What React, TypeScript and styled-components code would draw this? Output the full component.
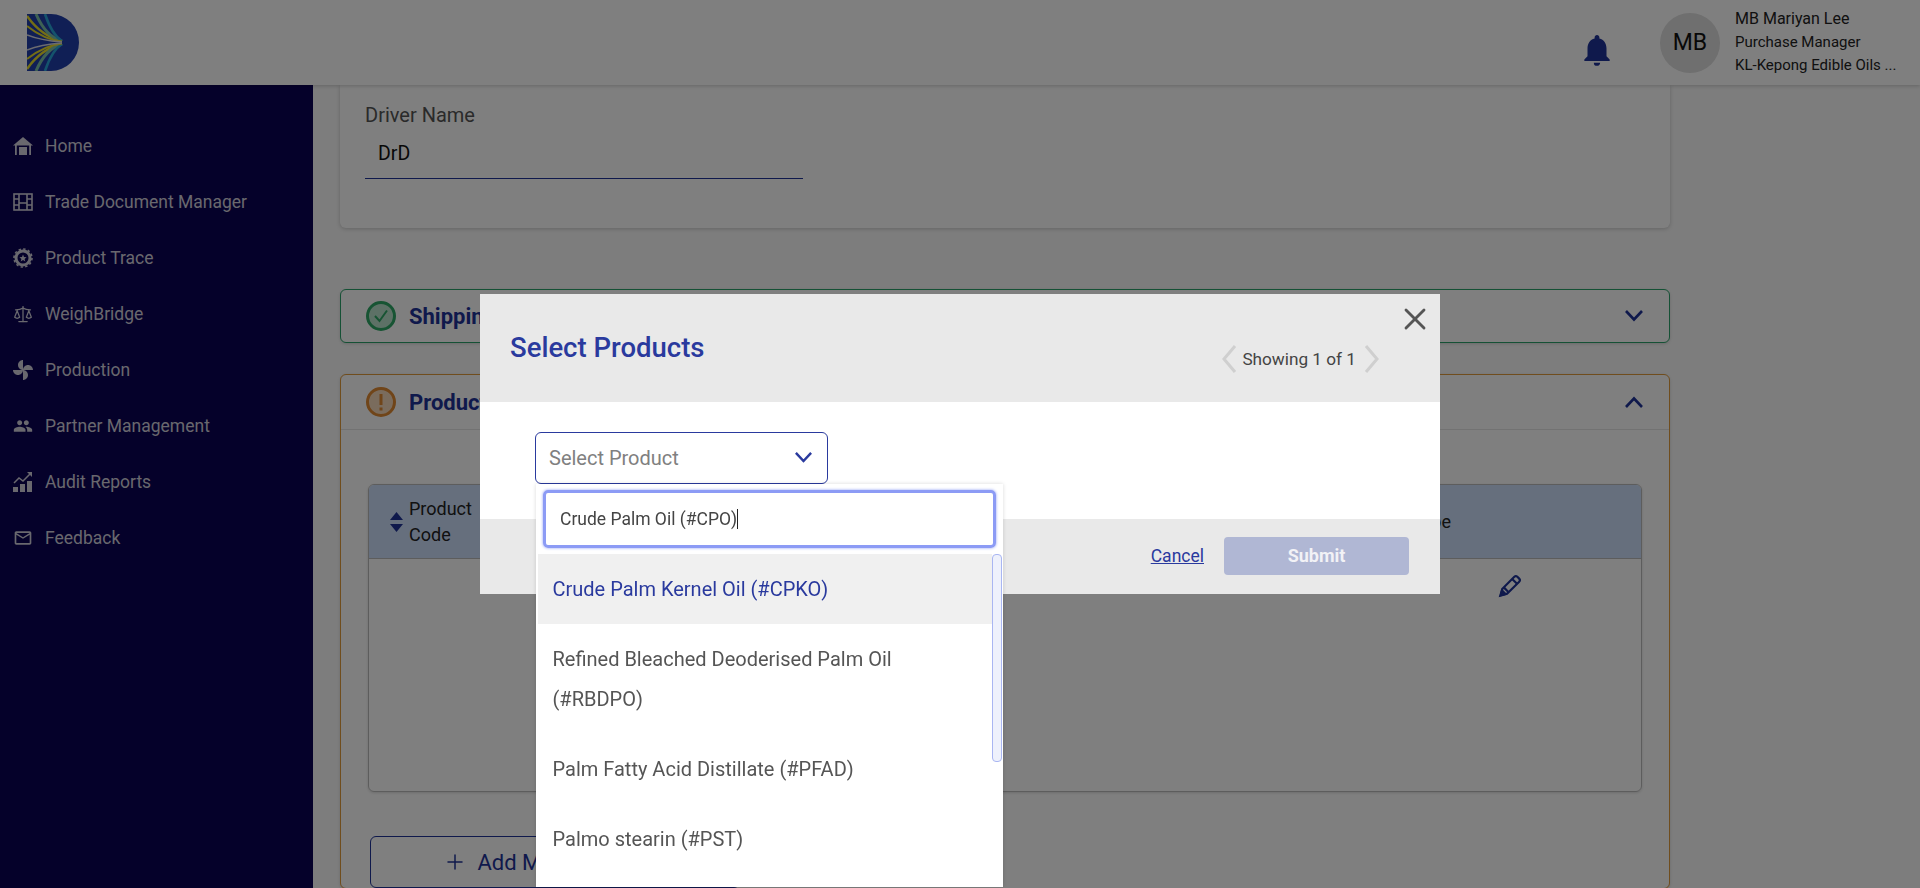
import { Plus, Scale, X } from "lucide-react";
import { MdMailOutline, MdNotifications, MdPeople } from "react-icons/md";
import styled, { createGlobalStyle } from "styled-components";

const navy = "#1f3398";
const indigo = "#2a3a9e";

const GlobalStyle = createGlobalStyle`
  * {
    box-sizing: border-box;
  }
  html, body {
    margin: 0;
    height: 100%;
    overflow: hidden;
    font-family: Roboto, "Liberation Sans", sans-serif;
  }
`;

const Page = styled.div`
  height: 100vh;
  display: flex;
  flex-direction: column;
  overflow: hidden;
  background: #fafafa;
`;

const Topbar = styled.header`
  height: 85px;
  flex: none;
  display: flex;
  align-items: center;
  padding: 0 10px 0 27px;
  background: #fff;
  box-shadow: 0 1px 4px rgba(0, 0, 0, 0.2);
  z-index: 1;
`;

const BellWrap = styled.div`
  margin-left: auto;
  display: flex;
  margin-top: 15px;
  color: ${navy};
`;

const Avatar = styled.div`
  width: 60px;
  height: 60px;
  margin: 0 15px 0 44px;
  border-radius: 50%;
  background: #dedede;
  color: #111;
  font-size: 23px;
  display: flex;
  align-items: center;
  justify-content: center;
`;

const UserBox = styled.div`
  width: 175px;
  margin-top: -2px;
  display: flex;
  flex-direction: column;
  color: #222;
`;

const UserName = styled.div`
  font-size: 16px;
  line-height: 24px;
`;

const UserLine = styled.div`
  font-size: 15px;
  line-height: 23px;
  white-space: nowrap;
`;

const Body = styled.div`
  flex: 1;
  display: flex;
  min-height: 0;
`;

const Sidebar = styled.nav`
  width: 313px;
  flex: none;
  padding-top: 33px;
  background: #0a0254;
`;

const NavItem = styled.div`
  height: 56px;
  display: flex;
  align-items: center;
  gap: 12px;
  padding-left: 13px;
  color: #d2d0dc;
  font-size: 17.5px;
`;

const Main = styled.main`
  flex: 1;
  padding: 0 250px 0 27px;
  overflow: hidden;
`;

const DriverCard = styled.section`
  height: 143px;
  padding: 18px 25px 0;
  background: #fff;
  border-radius: 0 0 6px 6px;
  box-shadow: 0 1px 4px rgba(0, 0, 0, 0.2);
`;

const FieldLabel = styled.div`
  font-size: 20px;
  line-height: 25px;
  color: #555;
`;

const FieldValue = styled.div`
  width: 438px;
  height: 51px;
  padding-left: 13px;
  display: flex;
  align-items: center;
  font-size: 19.5px;
  color: #111;
  border-bottom: 1px solid ${navy};
`;

const Accordion = styled.section<{ $tone: string; $gap: number }>`
  margin-top: ${({ $gap }) => $gap}px;
  border: 1px solid ${({ $tone }) => $tone};
  border-radius: 6px;
  background: #fff;
  box-shadow: 0 1px 3px rgba(0, 0, 0, 0.15);
`;

const AccordionHead = styled.div<{ $divided?: boolean }>`
  height: ${({ $divided }) => ($divided ? 55 : 52)}px;
  display: flex;
  align-items: center;
  gap: 13px;
  padding: 0 25px 0 25px;
  color: ${navy};
  border-bottom: ${({ $divided }) => ($divided ? "1px solid #e4e4e4" : "none")};
`;

const AccordionTitle = styled.div`
  flex: 1;
  font-size: 22px;
  font-weight: 700;
`;

const AccordionPanel = styled.div`
  padding: 54px 27px 0;
`;

const ProductTable = styled.div`
  width: 1274px;
  height: 308px;
  border: 1px solid #bbb;
  border-radius: 6px;
  overflow: hidden;
  box-shadow: 0 1px 3px rgba(0, 0, 0, 0.15);
`;

const TableRow = styled.div<{ $head?: boolean }>`
  display: grid;
  grid-template-columns: 140px 1fr 1fr 1fr 150px 190px;
  height: ${({ $head }) => ($head ? "74px" : "auto")};
  align-items: center;
  background: ${({ $head }) => ($head ? "#cddffa" : "transparent")};
  border-bottom: ${({ $head }) => ($head ? "1px solid #bbb" : "none")};
`;

const HeadCell = styled.div<{ $right?: boolean }>`
  display: flex;
  align-items: center;
  justify-content: ${({ $right }) => ($right ? "flex-end" : "flex-start")};
  gap: 6px;
  padding-left: 21px;
  font-size: 18px;
  line-height: 26px;
  color: #222;
`;

const EditCell = styled.div`
  grid-column: 6;
  padding: 14px 0 0 46px;
  color: ${navy};
`;

const AddButton = styled.button`
  width: 370px;
  height: 52px;
  margin: 44px 0 0 2px;
  display: flex;
  align-items: center;
  justify-content: center;
  gap: 10px;
  background: #fff;
  border: 1px solid ${navy};
  border-radius: 6px;
  color: ${navy};
  font-family: inherit;
  font-size: 22px;
`;

const Overlay = styled.div`
  position: fixed;
  inset: 0;
  display: flex;
  justify-content: center;
  padding-top: 294px;
  background: rgba(0, 0, 0, 0.5);
  z-index: 5;
`;

const Modal = styled.div`
  width: 960px;
  height: 300px;
  display: flex;
  flex-direction: column;
  position: relative;
  background: #fff;
`;

const ModalHead = styled.div`
  height: 108px;
  display: flex;
  align-items: center;
  justify-content: space-between;
  padding: 0 61px 0 30px;
  background: #e9e9e9;
`;

const ModalTitle = styled.h2`
  margin: 0 0 2px;
  font-size: 27.5px;
  font-weight: 500;
  color: ${indigo};
`;

const Pager = styled.div`
  display: flex;
  align-items: center;
  gap: 5px;
  margin-top: 21px;
  font-size: 17.2px;
  color: #444;
`;

const PagerCount = styled.span`
  margin-right: 3px;
`;

const CloseButton = styled.div`
  position: absolute;
  top: 7px;
  right: 7px;
  display: flex;
  color: #555;
`;

const ModalBody = styled.div`
  height: 117px;
  padding: 30px 0 0 55px;
`;

const SelectWrap = styled.div`
  width: 293px;
  position: relative;
`;

const SelectBox = styled.div`
  height: 52px;
  display: flex;
  align-items: center;
  justify-content: space-between;
  padding: 0 14px 0 13px;
  border: 1px solid ${indigo};
  border-radius: 6px;
  color: #808080;
  font-size: 20px;
`;

const Menu = styled.div`
  position: absolute;
  top: 100%;
  left: 1px;
  width: 467px;
  height: 403px;
  padding-top: 6px;
  background: #fff;
  box-shadow: 0 0 4px rgba(0, 0, 0, 0.15);
  z-index: 2;
`;

const SearchBox = styled.div`
  height: 58px;
  margin: 0 7px;
  padding-left: 14px;
  display: flex;
  align-items: center;
  border: 3px solid #8c9bf5;
  border-radius: 5px;
  box-shadow: 0 0 3px #8c9bf5;
  font-size: 17.5px;
  color: #444;
`;

const Caret = styled.span`
  height: 20px;
  border-left: 1px solid #222;
`;

const OptionList = styled.div`
  position: relative;
  margin: 6px 11px 0 2px;
`;

const Option = styled.div<{ $active?: boolean }>`
  padding: 15px 40px 15px 14.5px;
  font-size: 20px;
  line-height: 40px;
  color: ${({ $active }) => ($active ? indigo : "#555")};
  background: ${({ $active }) => ($active ? "#f0f0f0" : "transparent")};
`;

const ScrollThumb = styled.div`
  position: absolute;
  top: 0;
  right: -10px;
  width: 10px;
  height: 208px;
  background: #eef1fc;
  border: 1px solid #a9b6f2;
  border-radius: 4px;
`;

const ModalFoot = styled.div`
  height: 75px;
  display: flex;
  align-items: center;
  justify-content: flex-end;
  gap: 20px;
  padding: 0 31px 2px 0;
  background: #e9e9e9;
`;

const CancelLink = styled.a`
  font-size: 17.5px;
  color: ${indigo};
  text-decoration: underline;
`;

const SubmitButton = styled.button`
  width: 185px;
  height: 38px;
  border: none;
  border-radius: 4px;
  background: #b0b7d4;
  color: #f2f2f6;
  font-family: inherit;
  font-size: 18px;
  font-weight: 700;
`;

const Logo = () => {
  const stripes = (
    <>
      <path d="M35 27C22 24 9 15 0 2" stroke="#e8dc2a" strokeWidth="2.4" fill="none" />
      <path d="M35 27.3C24 24 15 14 9 0" stroke="#7cc2a8" strokeWidth="3" fill="none" />
      <path d="M35 27C27 22 22 12 18 0" stroke="#29a6d8" strokeWidth="2.6" fill="none" />
      <path d="M35 27.6C22 26 10 20 0 12" stroke="#e8dc2a" strokeWidth="2" fill="none" />
      <path d="M35 28C22 27 10 25 0 21" stroke="#d8d8e0" strokeWidth="1.6" fill="none" />
    </>
  );
  return (
    <svg width="52" height="57" viewBox="0 0 52 57">
      <path d="M0 0H24A28 28.500 0 0 1 24 57H0Z" fill="#213eaa" />
      {stripes}
      <g transform="matrix(1 0 0 -1 0 57)">{stripes}</g>
    </svg>
  );
};

const HomeIcon = () => (
  <svg width="20" height="20" viewBox="0 0 20 20" fill="currentColor">
    <path d="M10 1L0 9.500h20z" />
    <rect x="2" y="9" width="1.800" height="10" />
    <rect x="16.200" y="9" width="1.800" height="10" />
    <rect x="6" y="11" width="8" height="8" />
  </svg>
);

const FilmIcon = () => (
  <svg width="20" height="20" viewBox="0 0 20 20" fill="none" stroke="currentColor" strokeWidth="1.6">
    <rect x="1" y="2" width="18" height="16" />
    <path d="M6 2v16M14 2v16M1 7h5M1 13h5M14 7h5M14 13h5M6 11h8" />
  </svg>
);

const BadgeIcon = () => (
  <svg width="20" height="20" viewBox="0 0 20 20" fill="currentColor">
    <circle cx="10" cy="10" r="7" fill="none" stroke="currentColor" strokeWidth="3" />
    <circle cx="10" cy="10" r="9" fill="none" stroke="currentColor" strokeWidth="1.6" strokeDasharray="2.4 2.3" />
    <path d="M10 6.500l1 2.500 2.600.2-2 1.700.7 2.600L10 12l-2.300 1.500.7-2.600-2-1.700 2.600-.2z" />
  </svg>
);

const PinwheelIcon = () => (
  <svg width="20" height="20" viewBox="1 1 22 22" fill="currentColor">
    <path d="M12 12c0-3 2.500-5.500 5.500-5.500S23 9 23 12H12zm0 0c0 3-2.500 5.500-5.500 5.500S1 15 1 12h11zm0 0c-3 0-5.500-2.500-5.500-5.500S9 1 12 1v11zm0 0c3 0 5.500 2.500 5.500 5.500S15 23 12 23V12z" />
  </svg>
);

const ReportIcon = () => (
  <svg width="20" height="20" viewBox="0 0 20 20" fill="currentColor">
    <rect x="0" y="15" width="5" height="5" />
    <rect x="7" y="12" width="5" height="8" />
    <rect x="14" y="9" width="5" height="11" />
    <path d="M1 11l5-5 4 3 7-7" fill="none" stroke="currentColor" strokeWidth="1.5" />
    <path d="M14 0h5v5z" />
  </svg>
);

const PencilIcon = () => (
  <svg width="26" height="26" viewBox="0 0 24 24" fill="none" stroke="currentColor" strokeWidth="2">
    <path d="M3.500 20.500l1.500-6L16 3.500a2 2 0 0 1 2.800 0l1.700 1.700a2 2 0 0 1 0 2.800L9.500 19z" />
    <path d="M14 5.500l4.500 4.500M6.500 13.500l4 4" />
    <path d="M3 21l1.500-5 3.500 3.500z" fill="currentColor" />
  </svg>
);

const StatusIcon = ({ tone, kind }: { tone: string; kind: "ok" | "warn" }) => (
  <svg width="30" height="30" viewBox="0 0 30 30" fill="none">
    <circle cx="15" cy="15" r="13.500" stroke={tone} strokeWidth="3" fill={`${tone}55`} />
    {kind === "ok" ? (
      <path d="M9 15l4.500 5L21 9.500" stroke={tone} strokeWidth="2" />
    ) : (
      <path d="M15 7v11M15 20.500v3" stroke={tone} strokeWidth="3" />
    )}
  </svg>
);

const SortIcon = () => (
  <svg width="13" height="20" viewBox="0 0 13 20" fill={navy}>
    <path d="M6.500 0L13 8H0zM0 12h13l-6.500 8z" />
  </svg>
);

const PagerChevron = ({ flip }: { flip?: boolean }) => (
  <svg width="15" height="28" viewBox="0 0 15 28" fill="none" stroke="#cfcfcf" strokeWidth="3">
    <path d={flip ? "M2 1l11 13L2 27" : "M13 1L2 14l11 13"} />
  </svg>
);

const Chevron = ({ up, width, color }: { up?: boolean; width: number; color?: string }) => (
  <svg width={width} height={width * 0.6} viewBox="0 0 20 12" fill="none" stroke={color || "currentColor"} strokeWidth="2.600">
    <path d={up ? "M2 11l8-8.500 8 8.500" : "M2 1l8 8.500L18 1"} />
  </svg>
);

const navItems = [
  { label: "Home", icon: <HomeIcon /> },
  { label: "Trade Document Manager", icon: <FilmIcon /> },
  { label: "Product Trace", icon: <BadgeIcon /> },
  { label: "WeighBridge", icon: <Scale size={20} strokeWidth={1.5} /> },
  { label: "Production", icon: <PinwheelIcon /> },
  { label: "Partner Management", icon: <MdPeople size={20} /> },
  { label: "Audit Reports", icon: <ReportIcon /> },
  { label: "Feedback", icon: <MdMailOutline size={20} /> },
];

const App = () => {
  return (
    <Page>
      <GlobalStyle />
      <Topbar>
        <Logo />
        <BellWrap>
          <MdNotifications size={38} />
        </BellWrap>
        <Avatar>MB</Avatar>
        <UserBox>
          <UserName>MB Mariyan Lee</UserName>
          <UserLine>Purchase Manager</UserLine>
          <UserLine>KL-Kepong Edible Oils ...</UserLine>
        </UserBox>
      </Topbar>
      <Body>
        <Sidebar>
          {navItems.map((item) => (
            <NavItem key={item.label}>
              {item.icon}
              {item.label}
            </NavItem>
          ))}
        </Sidebar>
        <Main>
          <DriverCard>
            <FieldLabel>Driver Name</FieldLabel>
            <FieldValue>DrD</FieldValue>
          </DriverCard>
          <Accordion $tone="#2ba36a" $gap={61}>
            <AccordionHead>
              <StatusIcon tone="#2fa866" kind="ok" />
              <AccordionTitle>Shipping Details</AccordionTitle>
              <Chevron width={20} />
            </AccordionHead>
          </Accordion>
          <Accordion $tone="#e09a3a" $gap={31}>
            <AccordionHead $divided>
              <StatusIcon tone="#e08a32" kind="warn" />
              <AccordionTitle>Products</AccordionTitle>
              <Chevron up width={20} />
            </AccordionHead>
            <AccordionPanel>
              <ProductTable>
                <TableRow $head>
                  <HeadCell>
                    <SortIcon />
                    <span>
                      Product
                      <br />
                      Code
                    </span>
                  </HeadCell>
                  <HeadCell>Product Name</HeadCell>
                  <HeadCell>Quantity</HeadCell>
                  <HeadCell>Unit</HeadCell>
                  <HeadCell $right>Package Type</HeadCell>
                  <span />
                </TableRow>
                <TableRow>
                  <EditCell>
                    <PencilIcon />
                  </EditCell>
                </TableRow>
              </ProductTable>
              <AddButton>
                <Plus size={24} strokeWidth={1.5} />
                Add More Products
              </AddButton>
            </AccordionPanel>
          </Accordion>
        </Main>
      </Body>
      <Overlay>
        <Modal>
          <ModalHead>
            <ModalTitle>Select Products</ModalTitle>
            <Pager>
              <PagerChevron />
              <PagerCount>Showing 1 of 1</PagerCount>
              <PagerChevron flip />
            </Pager>
          </ModalHead>
          <CloseButton>
            <X size={36} strokeWidth={1.9} />
          </CloseButton>
          <ModalBody>
            <SelectWrap>
              <SelectBox>
                Select Product
                <Chevron width={19} color={indigo} />
              </SelectBox>
              <Menu>
                <SearchBox>
                  Crude Palm Oil (#CPO)
                  <Caret />
                </SearchBox>
                <OptionList>
                  <ScrollThumb />
                  <Option $active>Crude Palm Kernel Oil (#CPKO)</Option>
                  <Option>Refined Bleached Deoderised Palm Oil (#RBDPO)</Option>
                  <Option>Palm Fatty Acid Distillate (#PFAD)</Option>
                  <Option>Palmo stearin (#PST)</Option>
                </OptionList>
              </Menu>
            </SelectWrap>
          </ModalBody>
          <ModalFoot>
            <CancelLink>Cancel</CancelLink>
            <SubmitButton>Submit</SubmitButton>
          </ModalFoot>
        </Modal>
      </Overlay>
    </Page>
  );
};

export default App;
